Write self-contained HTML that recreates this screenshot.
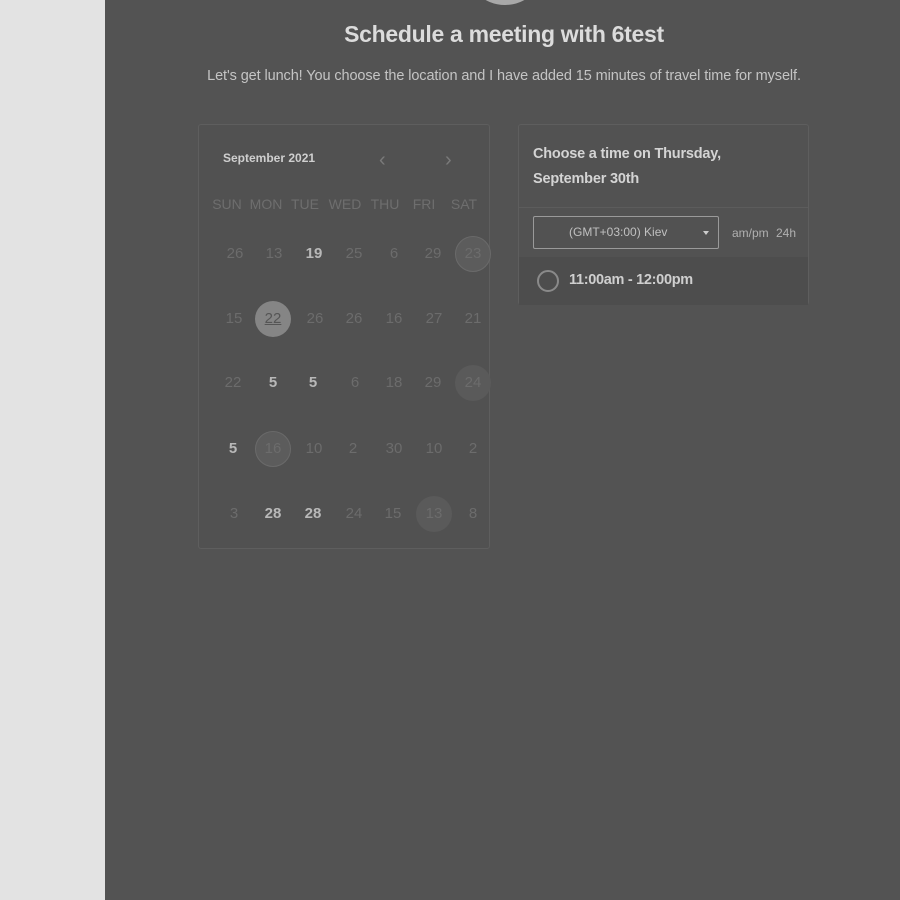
<!DOCTYPE html>
<html><head><style>
*{margin:0;padding:0;box-sizing:border-box}
body{width:900px;height:900px;overflow:hidden;background:#535353;font-family:"Liberation Sans",sans-serif;position:relative}
.left{position:absolute;left:0;top:0;width:105px;height:900px;background:#e3e3e3}
.av{position:absolute;left:465px;top:-75px;width:80px;height:80px;border-radius:50%;background:#a8a8a8}
h1{position:absolute;left:0;width:1008px;top:21px;text-align:center;font-size:23px;font-weight:bold;color:#dcdcdc;letter-spacing:-0.3px}
.sub{position:absolute;left:0;width:1008px;top:68px;text-align:center;font-size:14.5px;color:#c4c4c4;letter-spacing:-0.1px}
.cal{position:absolute;left:198px;top:124px;width:292px;height:425px;border:1px solid #5e5e5e;border-radius:3px;background:#515151}
.mon{position:absolute;left:24px;top:26px;font-size:12px;font-weight:bold;color:#cfcfcf}
.arr{position:absolute;top:24px;font-size:20px;color:#7a7a7a}
.dn{position:absolute;top:71px;width:40px;margin-left:-20px;text-align:center;font-size:14px;color:#6e6e6e}
.d{position:absolute;width:36px;height:36px;margin-left:-18px;margin-top:-18px;border-radius:50%;text-align:center;line-height:36px;font-size:15px;color:#6c6c6c}
.b{color:#b8b8b8;font-weight:bold}
.c{background:#5a5a5a}
.r{background:#5c5c5c;border:1px solid #6a6a6a;line-height:34px}
.s{background:#858585;color:#555;text-decoration:underline}
.rp{position:absolute;left:518px;top:124px;width:291px;height:181px;border:1px solid #5e5e5e;border-radius:3px;background:#525252}
.rh{position:absolute;left:14px;top:17px;font-size:14.5px;font-weight:bold;color:#d4d4d4;line-height:25px;letter-spacing:-0.2px}
.div{position:absolute;left:0;right:0;top:82px;border-top:1px solid #5c5c5c}
.sel{position:absolute;left:14px;top:91px;width:186px;height:33px;border:1px solid #9a9a9a;border-radius:2px;font-size:12px;color:#c0c0c0;line-height:31px;padding-left:35px}
.sel:after{content:"";position:absolute;right:9px;top:14px;border:3px solid transparent;border-top:4px solid #ccc}
.fmt{position:absolute;left:213px;top:101px;font-size:12px;color:#b0b0b0;word-spacing:4px}
.tr{position:absolute;left:0;right:0;top:132px;height:48px;background:#4d4d4d}
.rad{position:absolute;left:18px;top:13px;width:22px;height:22px;border:2px solid #8a8a8a;border-radius:50%}
.tt{position:absolute;left:50px;top:15px;font-size:14.5px;font-weight:bold;color:#cfcfcf;letter-spacing:-0.3px}
</style></head><body>
<div class="left"></div>
<div class="av"></div>
<h1>Schedule a meeting with 6test</h1>
<div class="sub">Let's get lunch! You choose the location and I have added 15 minutes of travel time for myself.</div>
<div class="cal">
<div class="mon">September 2021</div>
<div class="arr" style="left:180px">&#8249;</div>
<div class="arr" style="left:246px">&#8250;</div>
<div class="dn" style="left:28px">SUN</div><div class="dn" style="left:67px">MON</div><div class="dn" style="left:106px">TUE</div><div class="dn" style="left:146px">WED</div><div class="dn" style="left:186px">THU</div><div class="dn" style="left:225px">FRI</div><div class="dn" style="left:265px">SAT</div>
<div class="d" style="left:36px;top:129px">26</div><div class="d" style="left:75px;top:129px">13</div><div class="d b" style="left:115px;top:129px">19</div><div class="d" style="left:155px;top:129px">25</div><div class="d" style="left:195px;top:129px">6</div><div class="d" style="left:234px;top:129px">29</div><div class="d r" style="left:274px;top:129px">23</div>
<div class="d" style="left:35px;top:194px">15</div><div class="d s" style="left:74px;top:194px">22</div><div class="d" style="left:116px;top:194px">26</div><div class="d" style="left:155px;top:194px">26</div><div class="d" style="left:195px;top:194px">16</div><div class="d" style="left:235px;top:194px">27</div><div class="d" style="left:274px;top:194px">21</div>
<div class="d" style="left:34px;top:258px">22</div><div class="d b" style="left:74px;top:258px">5</div><div class="d b" style="left:114px;top:258px">5</div><div class="d" style="left:156px;top:258px">6</div><div class="d" style="left:195px;top:258px">18</div><div class="d" style="left:234px;top:258px">29</div><div class="d c" style="left:274px;top:258px">24</div>
<div class="d b" style="left:34px;top:324px">5</div><div class="d r" style="left:74px;top:324px">16</div><div class="d" style="left:115px;top:324px">10</div><div class="d" style="left:154px;top:324px">2</div><div class="d" style="left:195px;top:324px">30</div><div class="d" style="left:235px;top:324px">10</div><div class="d" style="left:274px;top:324px">2</div>
<div class="d" style="left:35px;top:389px">3</div><div class="d b" style="left:74px;top:389px">28</div><div class="d b" style="left:114px;top:389px">28</div><div class="d" style="left:155px;top:389px">24</div><div class="d" style="left:194px;top:389px">15</div><div class="d c" style="left:235px;top:389px">13</div><div class="d" style="left:274px;top:389px">8</div>
</div>
<div class="rp">
<div class="rh">Choose a time on Thursday,<br>September 30th</div>
<div class="div"></div>
<div class="sel">(GMT+03:00) Kiev</div>
<div class="fmt">am/pm 24h</div>
<div class="tr"><div class="rad"></div><div class="tt">11:00am - 12:00pm</div></div>
</div>
</body></html>
